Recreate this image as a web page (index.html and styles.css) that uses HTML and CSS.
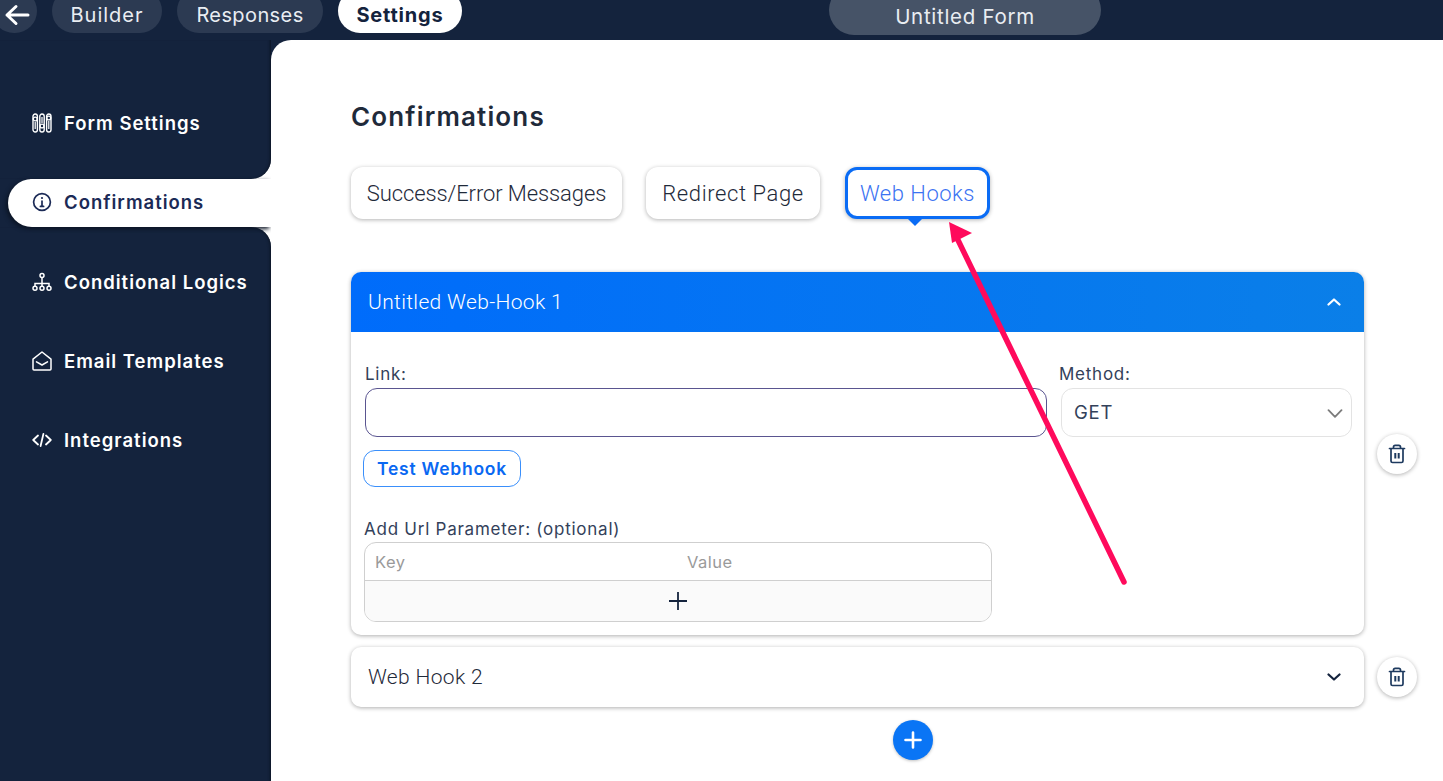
FILE: index.html
```html
<!DOCTYPE html>
<html lang="en">
<head>
<meta charset="utf-8">
<title>Untitled Form - Settings</title>
<link rel="stylesheet" href="styles.css">
</head>
<body>
<div class="page">
  <header class="topbar">
    <nav class="topnav">
      <a class="pill back"><svg width="26" height="24" viewBox="0 0 26 24" fill="none" stroke="#fff" stroke-width="3" stroke-linecap="round" stroke-linejoin="round"><path d="M24 12H3M12 3.500 3 12l9 8.500"/></svg></a>
      <a class="pill builder">Builder</a>
      <a class="pill responses">Responses</a>
      <a class="pill active">Settings</a>
    </nav>
    <div class="formtitle">Untitled Form</div>
  </header>
  <div class="shell">
    <aside class="sidebar">
      <div class="sideblock top">
        <a class="sideitem">
          <svg class="sideicon" viewBox="0 0 20 20" fill="none" stroke="#fff" stroke-width="1.400"><rect x="1" y="1" width="4.400" height="18" rx="2.200"/><rect x="7.800" y="1" width="4.400" height="18" rx="2.200"/><rect x="14.600" y="1" width="4.400" height="18" rx="2.200"/><circle cx="3.200" cy="6" r="1.900" fill="#14233d"/><circle cx="10" cy="13" r="1.900" fill="#14233d"/><circle cx="16.800" cy="5" r="1.900" fill="#14233d"/><path d="M3.200 9v7M10 4v6M16.800 8v8" stroke-width="1.200"/></svg>
          <span>Form Settings</span>
        </a>
      </div>
      <div class="sideactive">
        <a class="sideitem current">
          <svg class="sideicon" viewBox="0 0 20 20" fill="none" stroke="#1b2a56" stroke-width="1.700"><circle cx="10" cy="10" r="8.400"/><path d="M10 9v5.400M8.400 14.400h3.200" stroke-linecap="round"/><circle cx="10" cy="6" r="1.100" fill="#1b2a56" stroke="none"/></svg>
          <span>Confirmations</span>
        </a>
      </div>
      <div class="sideblock bottom">
        <a class="sideitem">
          <svg class="sideicon" viewBox="0 0 20 20" fill="none" stroke="#fff" stroke-width="1.500"><circle cx="10" cy="3.400" r="2"/><path d="M10 5.400v6M3 14.500V11.500h14v3M10 11.500v3"/><circle cx="3" cy="16.300" r="2"/><circle cx="10" cy="16.300" r="2"/><circle cx="17" cy="16.300" r="2"/></svg>
          <span>Conditional Logics</span>
        </a>
        <a class="sideitem">
          <svg class="sideicon" viewBox="0 0 20 20" fill="none" stroke="#fff" stroke-width="1.500" stroke-linejoin="round" stroke-linecap="round"><path d="M1 8.200 10 1l9 7.200V18a1 1 0 0 1-1 1H2a1 1 0 0 1-1-1z"/><path d="M4.500 10.800 10 14l5.500-3.200"/></svg>
          <span>Email Templates</span>
        </a>
        <a class="sideitem">
          <svg class="sideicon" viewBox="0 0 20 20" fill="none" stroke="#fff" stroke-width="1.800" stroke-linecap="round" stroke-linejoin="round"><path d="M6 5.500 1.200 10 6 14.500M14 5.500l4.800 4.500-4.800 4.500M11.400 4 8.600 16"/></svg>
          <span>Integrations</span>
        </a>
      </div>
    </aside>
    <main class="content">
      <h1 class="heading">Confirmations</h1>
      <div class="tabs">
        <button class="tab tab-success">Success/Error Messages</button>
        <button class="tab tab-redirect">Redirect Page</button>
        <button class="tab tab-hooks">Web Hooks</button>
      </div>
      <div class="hooks">
        <div class="hookrow">
          <section class="hook">
            <div class="hookhead open">
              <span>Untitled Web-Hook 1</span>
              <svg class="chev" viewBox="0 0 14 8" fill="none" stroke="#fff" stroke-width="2.200" stroke-linecap="round" stroke-linejoin="round"><path d="M1.500 6.500 7 1.500l5.500 5"/></svg>
            </div>
            <div class="hookbody">
              <div class="linkrow">
                <div class="field linkfield">
                  <label class="label">Link:</label>
                  <div class="textinput"></div>
                </div>
                <div class="field methodfield">
                  <label class="label">Method:</label>
                  <div class="selectbox">
                    <span>GET</span>
                    <svg class="selectchev" viewBox="0 0 16 9" fill="none" stroke="#7b7b7b" stroke-width="1.800" stroke-linecap="round" stroke-linejoin="round"><path d="M1.500 1.200 8 7.800l6.500-6.600"/></svg>
                  </div>
                </div>
              </div>
              <button class="testbtn">Test Webhook</button>
              <label class="label paramlabel">Add Url Parameter: (optional)</label>
              <div class="params">
                <div class="paramhead"><span class="pkey">Key</span><span>Value</span></div>
                <div class="paramadd"><svg width="20" height="20" viewBox="0 0 20 20" stroke="#14233d" stroke-width="1.800"><path d="M10 1v18M1 10h18"/></svg></div>
              </div>
            </div>
          </section>
          <button class="trash"><svg width="18" height="20" viewBox="0 0 18 20" fill="none" stroke="#1e3a5f" stroke-width="1.700" stroke-linecap="round" stroke-linejoin="round"><path d="M1.500 4.500h15M5.500 4.500V3a1.700 1.700 0 0 1 1.700-1.700h3.600A1.700 1.700 0 0 1 12.500 3v1.500M3 4.500V17a1.500 1.500 0 0 0 1.500 1.500h9A1.500 1.500 0 0 0 15 17V4.500"/><path d="M7.300 9v5.500M10.700 9v5.500" stroke-width="2" stroke-linecap="butt"/></svg></button>
        </div>
        <div class="hookrow">
          <section class="hook">
            <div class="hookhead">
              <span>Web Hook 2</span>
              <svg class="chev" viewBox="0 0 14 8" fill="none" stroke="#14233d" stroke-width="2.200" stroke-linecap="round" stroke-linejoin="round"><path d="M1.500 1.500 7 6.500l5.500-5"/></svg>
            </div>
          </section>
          <button class="trash"><svg width="18" height="20" viewBox="0 0 18 20" fill="none" stroke="#1e3a5f" stroke-width="1.700" stroke-linecap="round" stroke-linejoin="round"><path d="M1.500 4.500h15M5.500 4.500V3a1.700 1.700 0 0 1 1.700-1.700h3.600A1.700 1.700 0 0 1 12.500 3v1.500M3 4.500V17a1.500 1.500 0 0 0 1.500 1.500h9A1.500 1.500 0 0 0 15 17V4.500"/><path d="M7.300 9v5.500M10.700 9v5.500" stroke-width="2" stroke-linecap="butt"/></svg></button>
        </div>
      </div>
      <button class="addhook"><svg width="20" height="20" viewBox="0 0 20 20" stroke="#fff" stroke-width="2.600" stroke-linecap="round"><path d="M10 2.500v15M2.500 10h15"/></svg></button>
    </main>
  </div>
  <svg class="annotation" width="1443" height="781" viewBox="0 0 1443 781" fill="none">
    <path d="M1124 582 957 238" stroke="#ff0a5c" stroke-width="5.500" stroke-linecap="round"/>
    <path d="M949 222 972 233 952 243z" fill="#ff0a5c"/>
  </svg>
</div>
</body>
</html>
```
FILE: styles.css
```css
* { box-sizing: border-box; }
html, body { margin: 0; height: 100%; overflow: hidden; }
body { font-family: "Inter", "Liberation Sans", sans-serif; color: #1f2a3a; background: #14233d; }
.page { position: relative; width: 1443px; height: 781px; overflow: hidden; background: #14233d; }

.topbar { display: flex; height: 40px; align-items: flex-end; padding-bottom: 7px; position: relative; }
.topnav { display: flex; gap: 15px; margin-left: -8px; width: 837px; }
.pill { display: flex; align-items: center; justify-content: center; height: 44px; padding-top: 8px; border-radius: 22px; background: #2c3a52; color: #e9edf2; font-size: 20px; letter-spacing: .4px; }
.back { width: 45px; padding-left: 4px; }
.builder { width: 110px; letter-spacing: 1px; }
.responses { width: 146px; }
.pill.active { width: 124px; background: #fff; color: #14233d; font-weight: 700; letter-spacing: .8px; }
.formtitle { display: flex; align-items: center; justify-content: center; width: 272px; height: 50px; margin-bottom: -2px; border-radius: 25px; padding-top: 13px; background: #465367; color: #e9edf2; font-size: 20.500px; letter-spacing: .7px; }

.shell { display: flex; height: 741px; }
.sidebar { width: 271px; flex: none; display: flex; flex-direction: column; background: #fff; }
.sideblock { background: #14233d; box-shadow: inset -3px 0 3px -2px #0b1424; }
.sideblock.top { height: 139px; padding-top: 59px; border-bottom-right-radius: 20px; }
.sideblock.bottom { flex: 1; display: flex; flex-direction: column; gap: 31px; padding-top: 31px; border-top-right-radius: 20px; }
.sideactive { height: 48px; padding-left: 8px; background: linear-gradient(90deg, #14233d 30px, #fff 30px); }
.sideitem { display: flex; align-items: center; gap: 12px; height: 48px; padding-left: 32px; color: #fff; font-size: 18.500px; font-weight: 600; letter-spacing: 1px; }
.sideitem.current { padding: 0 0 2px 24px; background: #fff; color: #1b2a56; border-radius: 24px 0 0 24px; box-shadow: -2px 2px 4px #0b1424; clip-path: inset(-6px 0 -6px -6px); }
.sideicon { width: 20px; height: 20px; flex: none; }

.content { flex: 1; background: #fff; border-top-left-radius: 20px; padding: 58px 0 0 80px; }
.heading { margin: 0; height: 38px; line-height: 38px; font-size: 26px; font-weight: 600; color: #1f2a3a; letter-spacing: 1.150px; }
.tabs { display: flex; gap: 24px; margin-top: 31px; }
.tab { height: 52px; border: 0; border-radius: 12px; background: #fff; font-family: "Roboto", sans-serif; font-size: 22px; font-weight: 300; color: #1f2a3a; box-shadow: 0 1px 4px rgba(0,0,0,.3); position: relative; padding: 0; }
.tab-success { width: 271px; letter-spacing: -.1px; }
.tab-redirect { width: 174px; letter-spacing: .6px; }
.tab-hooks { width: 145px; margin-left: 1px; border: 3px solid #0a6cf5; color: #3b73f2; letter-spacing: .5px; }
.tab-hooks::after { content: ""; position: absolute; left: 60px; bottom: -10px; border: 7px solid transparent; border-bottom: 0; border-top-color: #0a6cf5; }

.hooks { display: flex; flex-direction: column; gap: 12px; margin-top: 53px; }
.hookrow { display: flex; align-items: center; gap: 13px; }
.hook { width: 1013px; border-radius: 10px; background: #fff; box-shadow: 0 1px 4px rgba(0,0,0,.32); overflow: hidden; }
.hookhead { display: flex; align-items: center; justify-content: space-between; height: 60px; padding: 0 23px 0 17px; font-family: "Roboto", sans-serif; font-size: 21px; font-weight: 300; letter-spacing: .35px; color: #1f2a3a; }
.hookhead.open { background: linear-gradient(90deg, #006cfb, #0a7fe8); color: #fff; }
.chev { width: 14px; height: 8px; }
.hookbody { height: 303px; padding: 31px 12px 0; }
.linkrow { display: flex; gap: 14px; padding-left: 2px; }
.field { display: flex; flex-direction: column; }
.linkfield { width: 682px; }
.methodfield { width: 291px; }
.methodfield .label { margin-left: -2px; }
.label { display: block; height: 25px; line-height: 22px; font-size: 17px; letter-spacing: .75px; color: #33415a; }
.textinput { height: 49px; border: 1px solid #5a5590; border-radius: 12px; }
.selectbox { display: flex; align-items: center; justify-content: space-between; height: 49px; padding: 0 8px 2px 12px; border: 1px solid #e3e3e3; border-radius: 12px; font-size: 18.500px; letter-spacing: .8px; color: #33415a; }
.selectchev { width: 16px; height: 9px; margin-top: 3px; }
.testbtn { display: block; width: 158px; height: 37px; margin-top: 13px; border: 1px solid #3a8ffb; border-radius: 12px; background: #fff; color: #0a68f2; font-family: inherit; font-size: 17.500px; font-weight: 600; letter-spacing: .75px; padding: 0; }
.paramlabel { margin: 31px 0 0 1px; height: 24px; }
.params { width: 628px; margin-left: 1px; height: 80px; border: 1px solid #cfcfcf; border-radius: 12px; overflow: hidden; }
.paramhead { display: flex; align-items: center; height: 38px; border-bottom: 1px solid #cfcfcf; padding: 1px 0 0 10px; font-size: 16.500px; letter-spacing: .5px; color: #9a9a9a; }
.pkey { width: 312px; }
.paramadd { display: flex; align-items: center; justify-content: center; height: 41px; padding-bottom: 2px; background: #fafafa; }
.trash { display: flex; align-items: center; justify-content: center; width: 40px; height: 40px; border: 0; padding: 0; border-radius: 50%; background: #fff; box-shadow: 0 1px 4px rgba(0,0,0,.3); }
.addhook { display: flex; align-items: center; justify-content: center; width: 40px; height: 40px; margin: 13px 0 0 542px; border: 0; padding: 0; border-radius: 50%; background: #0a75f5; box-shadow: 0 1px 3px rgba(0,0,0,.25); }

.annotation { position: absolute; left: 0; top: 0; pointer-events: none; }
```
